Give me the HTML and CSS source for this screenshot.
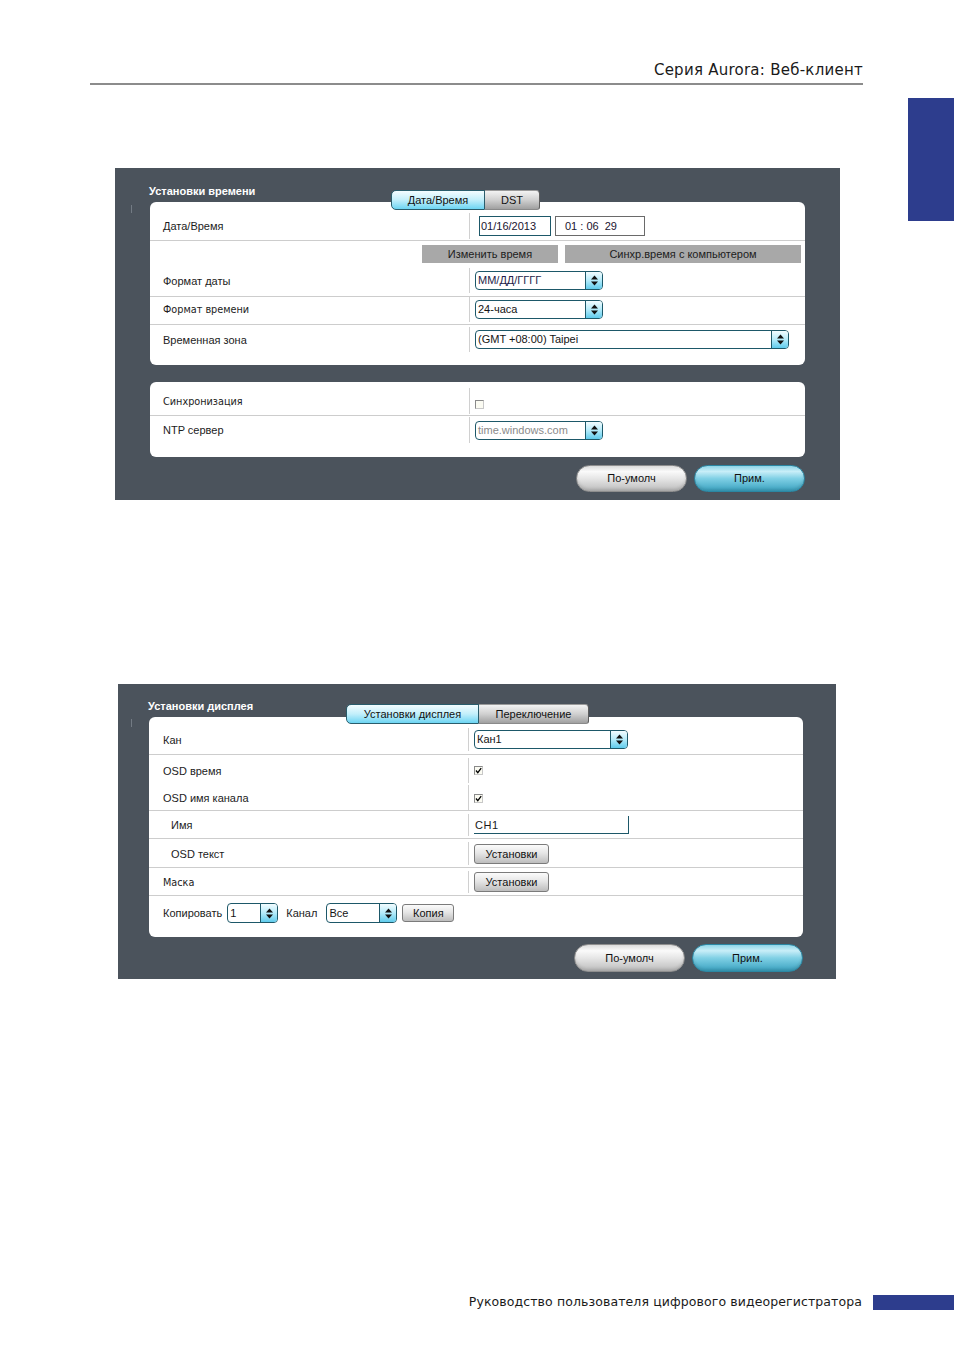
FILE: index.html
```html
<!DOCTYPE html>
<html lang="ru">
<head>
<meta charset="utf-8">
<title>Серия Aurora: Веб-клиент</title>
<link rel="stylesheet" href="styles.css">
</head>
<body>
<div class="page">
  <div class="chapter-tab"></div>
  <header class="doc-header"><span class="doc-title">Серия Aurora: Веб-клиент</span></header>

  <section class="panel panel-time">
    <div class="panel-head head-time"><h2 class="panel-title">Установки времени</h2></div>
    <div class="card card-main tick-time">
      <div class="tabs tabs-time">
        <div class="tab tab-active w-date">Дата/Время</div>
        <div class="tab tab-inactive w-dst">DST</div>
      </div>
      <div class="row sep r-dt">
        <div class="lab">Дата/Время</div>
        <div class="val val-date">
          <div class="textbox date-box">01/16/2013</div>
          <div class="textbox time-box">01 : 06&nbsp;&nbsp;29</div>
        </div>
      </div>
      <div class="btn-row">
        <button class="flat-btn w-change">Изменить время</button>
        <button class="flat-btn w-sync">Синхр.время с компьютером</button>
      </div>
      <div class="row sep r-fmt-date">
        <div class="lab">Формат даты</div>
        <div class="val">
          <div class="select w-128"><span class="select-text dark">ММ/ДД/ГГГГ</span><span class="select-btn"><svg width="9" height="13" viewBox="0 0 9 13"><path d="M4.5 1.5 L8 5.5 H1 Z M4.5 11.5 L8 7.5 H1 Z" fill="#111"/></svg></span></div>
        </div>
      </div>
      <div class="row sep r-fmt-time">
        <div class="lab lab-small">Формат времени</div>
        <div class="val">
          <div class="select w-128"><span class="select-text">24-часа</span><span class="select-btn"><svg width="9" height="13" viewBox="0 0 9 13"><path d="M4.5 1.5 L8 5.5 H1 Z M4.5 11.5 L8 7.5 H1 Z" fill="#111"/></svg></span></div>
        </div>
      </div>
      <div class="row r-zone">
        <div class="lab">Временная зона</div>
        <div class="val">
          <div class="select w-314"><span class="select-text">(GMT +08:00) Taipei</span><span class="select-btn"><svg width="9" height="13" viewBox="0 0 9 13"><path d="M4.5 1.5 L8 5.5 H1 Z M4.5 11.5 L8 7.5 H1 Z" fill="#111"/></svg></span></div>
        </div>
      </div>
    </div>

    <div class="card card-ntp">
      <div class="row sep r-sync">
        <div class="lab lab-small">Синхронизация</div>
        <div class="val"><span class="checkbox cb-low"></span></div>
      </div>
      <div class="row r-ntp">
        <div class="lab">NTP сервер</div>
        <div class="val">
          <div class="select w-128"><span class="select-text muted">time.windows.com</span><span class="select-btn"><svg width="9" height="13" viewBox="0 0 9 13"><path d="M4.5 1.5 L8 5.5 H1 Z M4.5 11.5 L8 7.5 H1 Z" fill="#111"/></svg></span></div>
        </div>
      </div>
    </div>

    <div class="actions actions-time">
      <button class="pill pill-default">По-умолч</button>
      <button class="pill pill-apply">Прим.</button>
    </div>
  </section>

  <section class="panel panel-display">
    <div class="panel-head head-display"><h2 class="panel-title">Установки дисплея</h2></div>
    <div class="card card-display tick-display">
      <div class="tabs tabs-display">
        <div class="tab tab-active w-disp">Установки дисплея</div>
        <div class="tab tab-inactive w-switch">Переключение</div>
      </div>
      <div class="row sep k-ch">
        <div class="lab">Кан</div>
        <div class="val">
          <div class="select w-154"><span class="select-text">Кан1</span><span class="select-btn"><svg width="9" height="13" viewBox="0 0 9 13"><path d="M4.5 1.5 L8 5.5 H1 Z M4.5 11.5 L8 7.5 H1 Z" fill="#111"/></svg></span></div>
        </div>
      </div>
      <div class="row k-osd-time">
        <div class="lab">OSD время</div>
        <div class="val"><span class="checkbox"><svg width="7" height="7" viewBox="0 0 7 7"><path d="M1 3.5 L2.8 5.6 L6.2 1.2" stroke="#000" stroke-width="1.3" fill="none"/></svg></span></div>
      </div>
      <div class="row sep k-osd-name">
        <div class="lab">OSD имя канала</div>
        <div class="val"><span class="checkbox"><svg width="7" height="7" viewBox="0 0 7 7"><path d="M1 3.5 L2.8 5.6 L6.2 1.2" stroke="#000" stroke-width="1.3" fill="none"/></svg></span></div>
      </div>
      <div class="row sep k-name">
        <div class="lab lab-indent">Имя</div>
        <div class="val"><div class="name-input">CH1</div></div>
      </div>
      <div class="row sep k-osd-text">
        <div class="lab lab-indent">OSD текст</div>
        <div class="val"><button class="set-btn">Установки</button></div>
      </div>
      <div class="row sep k-mask">
        <div class="lab lab-small">Маска</div>
        <div class="val"><button class="set-btn">Установки</button></div>
      </div>
      <div class="copy-row">
        <span class="copy-label">Копировать</span>
        <div class="select w-51"><span class="select-text">1</span><span class="select-btn"><svg width="9" height="13" viewBox="0 0 9 13"><path d="M4.5 1.5 L8 5.5 H1 Z M4.5 11.5 L8 7.5 H1 Z" fill="#111"/></svg></span></div>
        <span class="copy-label chan-label">Канал</span>
        <div class="select w-71"><span class="select-text">Все</span><span class="select-btn"><svg width="9" height="13" viewBox="0 0 9 13"><path d="M4.5 1.5 L8 5.5 H1 Z M4.5 11.5 L8 7.5 H1 Z" fill="#111"/></svg></span></div>
        <button class="set-btn copy-btn">Копия</button>
      </div>
    </div>

    <div class="actions">
      <button class="pill pill-default">По-умолч</button>
      <button class="pill pill-apply">Прим.</button>
    </div>
  </section>

  <footer class="doc-footer">
    <span class="footer-text">Руководство пользователя цифрового видеорегистратора</span>
    <span class="footer-bar"></span>
  </footer>
</div>
</body>
</html>
```

FILE: styles.css
```css
* { box-sizing: border-box; }
html, body { margin: 0; padding: 0; background: #fff; }
body { font-family: "Liberation Sans", Arial, sans-serif; color: #1c1c1c; }

.page { position: relative; width: 954px; min-height: 1350px; display: flow-root; }

.chapter-tab { position: absolute; left: 908px; top: 98px; width: 46px; height: 123px; background: #2d3d8d; }

.doc-header {
  margin-left: 90px; width: 773px; height: 85px; padding-top: 61px;
  border-bottom: 2px solid #8c8c8c; text-align: right;
}
.doc-title { font-family: "DejaVu Sans", sans-serif; font-size: 15px; line-height: 18px; letter-spacing: 0.25px; color: #1a1a1a; }

/* panels */
.panel { background: #4b535c; }
.panel-time { margin: 83px 0 0 115px; width: 725px; padding: 0 35px 8px 35px; }
.panel-display { margin: 184px 0 0 118px; width: 718px; padding: 0 33px 7px 31px; }

.panel-head { box-sizing: border-box; }
.head-time { height: 34px; padding-top: 17px; }
.head-display { height: 33px; padding-top: 16px; }
.panel-title { margin: 0 0 0 -1px; font: bold 11px/13px "Liberation Sans", Arial, sans-serif; color: #fff; }

.card { position: relative; background: #fff; border-radius: 6px; }
.card-ntp { margin-top: 17px; }
.tick-time::before, .tick-display::before {
  content: ""; position: absolute; top: 3px; width: 1px; height: 8px; background: #737b84;
}
.tick-time::before { left: -19px; }
.tick-display::before { left: -18px; top: 2px; }

/* tabs */
.tabs { position: absolute; display: flex; }
.tabs-time { top: -12px; left: 241px; }
.tabs-display { top: -13px; left: 197px; }
.tab { height: 20px; font-size: 11px; line-height: 18px; text-align: center; color: #111; border: 1px solid #2a5d6c; }
.tab-active { background: linear-gradient(#f4fdff, #c2effb 50%, #6dd5f3); border-radius: 5px 0 0 5px; }
.tab-inactive {
  background: linear-gradient(#f3f3f3, #d0d0d0 50%, #a0a0a0);
  border-color: #9a9a9a #5e5e5e #8a8a8a transparent; border-left: none;
  border-radius: 0 4px 3px 0;
}
.w-date { width: 94px; }
.w-dst { width: 55px; }
.w-disp { width: 133px; }
.w-switch { width: 110px; }

/* rows */
.row { display: grid; grid-template-columns: 319px 1fr; }
.sep { border-bottom: 1px solid #cdcdcd; }
.lab { display: flex; align-items: center; padding-left: 13px; font-size: 11px; white-space: nowrap; color: #1c1c1c; }
.card-display .lab { padding-left: 14px; }
.card-display .lab-indent { padding-left: 22px; }
.lab-small { font-family: "DejaVu Sans", sans-serif; font-size: 9.7px; }
.val { display: flex; align-items: center; padding-left: 5px; border-left: 1px solid #d0d0d0; }

.r-dt { height: 39px; padding: 11px 0 1px; }
.val-date { padding-left: 9px; gap: 4px; }
.r-fmt-date { height: 32px; padding: 3px 0 3px; }
.r-fmt-time { height: 28px; padding: 0 0 2px; }
.r-zone { height: 40px; padding: 2px 0 13px; }
.r-sync { height: 34px; padding: 6px 0 1px; }
.r-ntp { height: 41px; padding: 1px 0 14px; }

.k-ch { height: 38px; padding: 11px 0 3px; }
.k-osd-time { height: 28px; padding: 3px 0 0; }
.k-osd-name { height: 28px; padding: 2px 0 0; }
.k-name { height: 28px; padding: 3px 0 2px; }
.k-osd-text { height: 29px; padding: 3px 0 2px; }
.k-mask { height: 28px; padding: 3px 0 2px; }

/* inputs */
.textbox { height: 20px; font-size: 11px; line-height: 18px; color: #1a1430; background: #fff; }
.date-box { width: 72px; border: 1px solid #1d5869; padding-left: 1px; }
.time-box { width: 90px; border: 1px solid #6a6a6a; padding-left: 9px; }

.btn-row { display: flex; justify-content: flex-end; gap: 7px; height: 24px; padding: 4px 4px 0 0; }
.flat-btn {
  height: 18px; border: none; padding: 0; margin: 0; background: #a8a8a8;
  font: 11px/18px "Liberation Sans", Arial, sans-serif; color: #1c1c1c; text-align: center;
}
.w-change { width: 136px; }
.w-sync { width: 236px; }

.select {
  display: flex; height: 19px; border: 1px solid #1d5869; border-radius: 4px;
  background: #fff; overflow: hidden; flex: none;
}
.select-text { flex: 1; padding-left: 2px; font-size: 11px; line-height: 17px; color: #141414; white-space: nowrap; overflow: hidden; }
.select-text.dark { color: #241c48; }
.select-text.muted { color: #8a8a8a; }
.select-btn {
  width: 17px; border-left: 1px solid #1d5869; display: flex; align-items: center; justify-content: center;
  background: linear-gradient(#f2fcff, #b4ebfa 50%, #5fcbec);
}
.w-128 { width: 128px; }
.w-314 { width: 314px; }
.w-154 { width: 154px; }
.w-51 { width: 51px; height: 20px; }
.w-71 { width: 71px; height: 20px; }
.w-51 .select-text, .w-71 .select-text { line-height: 18px; }

.checkbox {
  width: 9px; height: 9px; display: flex; align-items: center; justify-content: center;
  border: 1px solid #8a8a8a; border-right-color: #c8c8c8; border-bottom-color: #c8c8c8; background: #fbfbf2;
}
.cb-low { margin-top: 6px; }
.k-osd-name .checkbox { margin-top: 2px; }

.name-input {
  width: 155px; height: 18px; border-right: 1px solid #1d5869; border-bottom: 1px solid #1d5869;
  font-size: 11px; line-height: 18px; padding-left: 1px; letter-spacing: 0.6px; color: #1a1a1a;
}

.set-btn {
  width: 75px; height: 20px; padding: 0; margin: 0; border: 1px solid #7b7b7b; border-radius: 3px;
  background: linear-gradient(#fbfbfb, #e6e6e6 45%, #bdbdbd);
  font: 11px/18px "Liberation Sans", Arial, sans-serif; color: #111; text-align: center;
}

.copy-row { display: flex; align-items: center; height: 41px; padding: 7px 0 14px 14px; }
.copy-label { font-size: 11px; margin-right: 5px; }
.chan-label { margin: 0 9px 0 8px; }
.copy-btn { width: 52px; height: 18px; line-height: 16px; margin-left: 5px; }

/* bottom action buttons */
.actions { display: flex; justify-content: flex-end; gap: 7px; margin-top: 7px; }
.actions-time { margin-top: 8px; }
.pill {
  width: 111px; height: 28px; border-radius: 14px; padding: 0; margin: 0;
  font: 11px/26px "Liberation Sans", Arial, sans-serif; color: #111; text-align: center;
  border: 1px solid #8e8e8e;
  background: linear-gradient(#dcdcdc 0%, #fafafa 22%, #e6e6e6 50%, #bcbcbc 100%);
  box-shadow: inset 0 -2px 3px rgba(0,0,0,0.12);
}
.actions-time .pill { height: 27px; line-height: 25px; }
.pill-apply {
  border-color: #2b87a3;
  background: linear-gradient(#8fd5e8 0%, #c8eef8 22%, #80d0e5 50%, #3aa2c0 100%);
}

/* footer */
.doc-footer { display: flex; justify-content: flex-end; align-items: center; height: 16px; margin-top: 315px; }
.footer-text { font-family: "DejaVu Sans", sans-serif; font-size: 12.5px; line-height: 16px; letter-spacing: 0.1px; color: #1a1a1a; margin-right: 11px; }
.footer-bar { width: 81px; height: 15px; background: #2d3d8d; }
```
